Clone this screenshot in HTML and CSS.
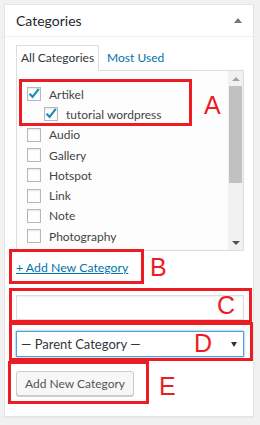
FILE: index.html
```html
<!DOCTYPE html>
<html>
<head>
<meta charset="utf-8">
<link rel="stylesheet" href="styles.css">
</head>
<body>
<div class="page">
  <div class="panel">
    <div class="panel-head">
      <h2 class="panel-title">Categories</h2>
      <span class="toggle"></span>
    </div>
    <div class="panel-body">
      <ul class="tabs">
        <li class="tab active">All Categories</li>
        <li class="tab">Most Used</li>
      </ul>
      <div class="list-box">
        <ul class="checklist">
          <li>
            <label class="row"><span class="cb checked"><svg viewBox="0 0 14 14" width="14" height="14"><path d="M2.5 6.8 L5.6 9.8 L11.8 1.8" fill="none" stroke="#1e8cbe" stroke-width="2.2"/></svg></span>Artikel</label>
            <ul class="children">
              <li><label class="row"><span class="cb checked"><svg viewBox="0 0 14 14" width="14" height="14"><path d="M2.5 6.8 L5.6 9.8 L11.8 1.8" fill="none" stroke="#1e8cbe" stroke-width="2.2"/></svg></span>tutorial wordpress</label></li>
            </ul>
          </li>
          <li><label class="row"><span class="cb"></span>Audio</label></li>
          <li><label class="row"><span class="cb"></span>Gallery</label></li>
          <li><label class="row"><span class="cb"></span>Hotspot</label></li>
          <li><label class="row"><span class="cb"></span>Link</label></li>
          <li><label class="row"><span class="cb"></span>Note</label></li>
          <li><label class="row"><span class="cb"></span>Photography</label></li>
        </ul>
        <div class="scrollbar">
          <span class="sb-btn"><span class="tri-up"></span></span>
          <span class="thumb"></span>
          <span class="sb-space"></span>
          <span class="sb-btn"><span class="tri-down"></span></span>
        </div>
      </div>
      <a class="add-link" href="#">+ Add New Category</a>
      <div class="cat-input"></div>
      <div class="parent-select">— Parent Category —<span class="caret"></span></div>
      <div class="btn-row"><span class="btn">Add New Category</span></div>
    </div>
  </div>

  <div class="mark mark-a"></div>
  <div class="mark mark-b"></div>
  <div class="mark mark-c"></div>
  <div class="mark mark-d"></div>
  <div class="mark mark-e"></div>
  <span class="letter letter-a">A</span>
  <span class="letter letter-b">B</span>
  <span class="letter letter-c">C</span>
  <span class="letter letter-d">D</span>
  <span class="letter letter-e">E</span>
</div>
</body>
</html>
```
FILE: styles.css
```css
* { box-sizing: border-box; }
body {
  margin: 0;
  background: #f1f1f1;
  font-family: Lato, "Segoe UI", sans-serif;
  font-size: 12px;
  color: #444;
}
.page {
  position: relative;
  width: 260px;
  height: 425px;
  padding: 4px 6px 0 4px;
}
.panel {
  background: #fff;
  border: 1px solid #e5e5e5;
  box-shadow: 0 1px 1px rgba(0,0,0,.04);
  height: 413px;
}
.panel-head {
  height: 32px;
  border-bottom: 1px solid #eee;
  display: flex;
  align-items: center;
  justify-content: space-between;
  padding: 0 10px 0 11px;
}
.panel-title {
  margin: 0;
  font-size: 14px;
  font-weight: 400;
  color: #23282d;
}
.toggle {
  width: 0;
  height: 0;
  border-left: 4px solid transparent;
  border-right: 4px solid transparent;
  border-bottom: 5px solid #72777c;
  margin-right: 1px;
}
.panel-body {
  padding: 8px 9px 0 11px;
}
.tabs {
  display: flex;
  list-style: none;
  margin: 0 0 -1px 0;
  padding: 0;
  gap: 3px;
  position: relative;
  z-index: 1;
}
.tab {
  height: 26px;
  padding: 3px 4px 0 4px;
  line-height: 18px;
  border: 1px solid transparent;
  border-bottom: none;
  color: #0073aa;
}
.tab.active {
  border-color: #ddd;
  background: #fff;
  color: #32373c;
}
.list-box {
  display: flex;
  height: 181px;
  border: 1px solid #ddd;
  background: #fdfdfd;
}
.checklist {
  flex: 1;
  overflow: hidden;
  list-style: none;
  margin: 0;
  padding: 13px 0 0 10px;
}
.checklist ul {
  list-style: none;
  margin: 0;
  padding: 0 0 0 17px;
}
.row {
  display: flex;
  align-items: center;
  height: 20.3px;
  white-space: nowrap;
}
.cb {
  flex: none;
  width: 14px;
  height: 14px;
  border: 1px solid #b4b9be;
  background: #fff;
  box-shadow: inset 0 1px 2px rgba(0,0,0,.1);
  margin-right: 8px;
  position: relative;
}
.cb svg {
  position: absolute;
  left: -1px;
  top: -1px;
  overflow: visible;
}
.scrollbar {
  flex: none;
  width: 15px;
  background: #f1f1f1;
  display: flex;
  flex-direction: column;
}
.sb-btn {
  height: 15px;
  display: flex;
  align-items: center;
  justify-content: center;
}
.tri-up {
  width: 0; height: 0;
  border-left: 4px solid transparent;
  border-right: 4px solid transparent;
  border-bottom: 4px solid #a3a3a3;
}
.tri-down {
  width: 0; height: 0;
  border-left: 4px solid transparent;
  border-right: 4px solid transparent;
  border-top: 4px solid #505050;
}
.thumb {
  height: 97px;
  margin: 0 1px;
  background: #c1c1c1;
}
.sb-space { flex: 1; }
.add-link {
  display: block;
  margin-top: 7px;
  line-height: 20px;
  font-size: 12.3px;
  color: #0073aa;
  text-decoration: underline;
  width: max-content;
}
.cat-input {
  margin-top: 17px;
  height: 25px;
  border: 1px solid #ddd;
  box-shadow: inset 0 1px 2px rgba(0,0,0,.07);
  background: #fff;
}
.parent-select {
  margin-top: 11px;
  height: 26px;
  border: 1px solid #5b9dd9;
  box-shadow: 0 0 2px rgba(30,140,190,.8);
  display: flex;
  align-items: center;
  justify-content: space-between;
  padding: 0 6px 0 4px;
  font-size: 13px;
  color: #32373c;
  background: #fff;
}
.caret {
  width: 0; height: 0;
  border-left: 3px solid transparent;
  border-right: 3px solid transparent;
  border-top: 5px solid #333;
}
.btn-row {
  margin-top: 14px;
  display: flex;
}
.btn {
  height: 25px;
  padding: 0 8px;
  line-height: 23px;
  border: 1px solid #ccc;
  border-radius: 3px;
  background: #f7f7f7;
  box-shadow: 0 1px 0 #ccc;
  color: #555;
}
.mark {
  position: absolute;
  border: 3px solid #ec1c24;
}
.mark-a { left: 19px; top: 79px; width: 173px; height: 47px; }
.mark-b { left: 9px; top: 249px; width: 135px; height: 35px; }
.mark-c { left: 9px; top: 288px; width: 243px; height: 35px; }
.mark-d { left: 9px; top: 322px; width: 244px; height: 39px; }
.mark-e { left: 8px; top: 361px; width: 141px; height: 43px; }
.letter {
  position: absolute;
  font-family: "Liberation Sans", Arial, sans-serif;
  font-size: 25px;
  line-height: 25px;
  color: #ec1c24;
}
.letter-a { left: 204px; top: 93px; }
.letter-b { left: 150px; top: 255px; }
.letter-c { left: 217px; top: 293px; }
.letter-d { left: 194px; top: 331px; }
.letter-e { left: 159px; top: 374px; }
```
